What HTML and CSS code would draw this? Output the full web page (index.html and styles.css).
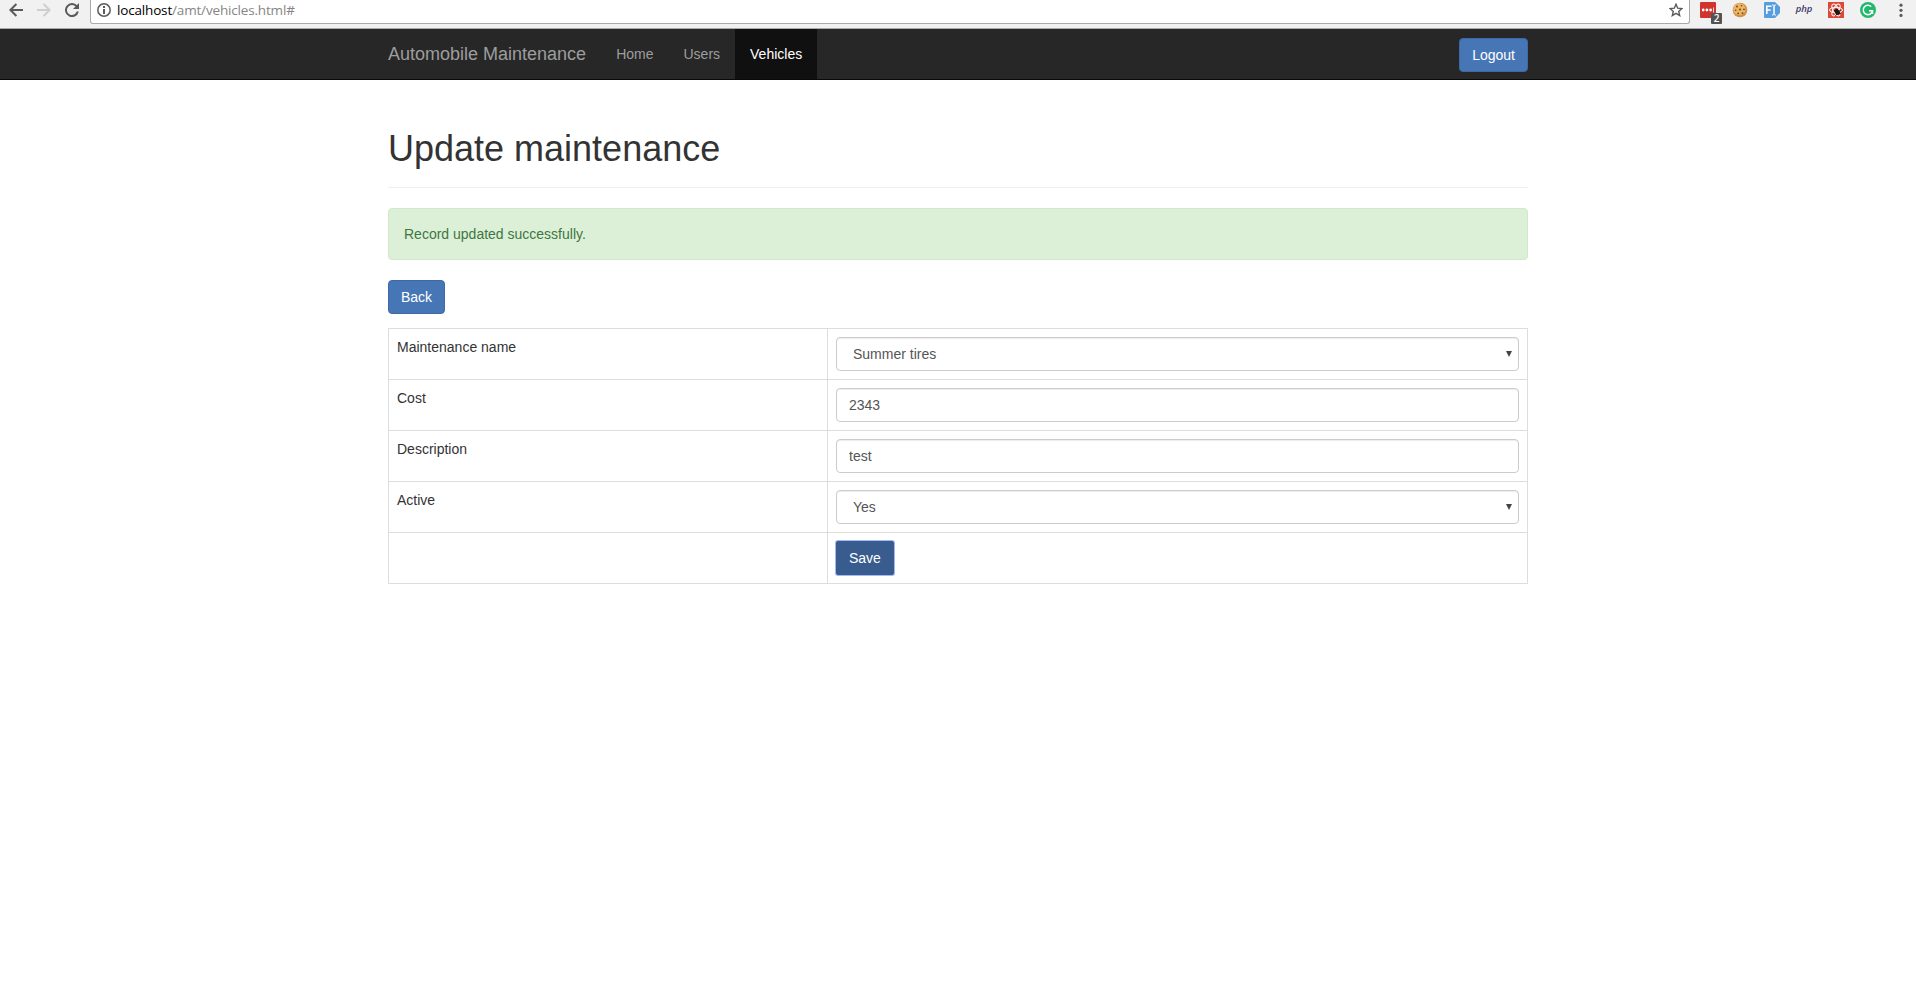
FILE: index.html
```html
<!DOCTYPE html>
<html lang="en">
<head>
<meta charset="utf-8">
<title>Automobile Maintenance</title>
<link rel="stylesheet" href="styles.css">
</head>
<body>
<div class="toolbar">
  <div class="controls">
    <svg width="14" height="14" viewBox="0 0 14 14" fill="none" stroke="#5a5a5a" stroke-width="2"><path d="M14 7H1.6M7.4 1L1.4 7l6 6"/></svg>
    <svg width="14" height="14" viewBox="0 0 14 14" fill="none" stroke="#cfcfcf" stroke-width="2"><path d="M0 7h12.4M6.6 1l6 6-6 6"/></svg>
    <svg width="14" height="14" viewBox="0 0 14 14"><path d="M11.7 3.4A6 6 0 1 0 12.8 8.5" fill="none" stroke="#5a5a5a" stroke-width="2"/><path d="M14 0v6H8z" fill="#5a5a5a"/></svg>
  </div>
  <div class="address">
    <svg width="14" height="14" viewBox="0 0 14 14"><circle cx="7" cy="7" r="6.2" fill="none" stroke="#5a5a5a" stroke-width="1.5"/><path d="M6 3h2v2H6zM6 6h2v5H6z" fill="#5a5a5a"/></svg>
    <span class="url"><span class="host">localhost</span>/amt/vehicles.html#</span>
    <svg class="star" width="14" height="14" viewBox="0 0 14 14"><path d="M7 1.2l1.7 4 4.2.4-3.2 2.8 1 4.2L7 10.4l-3.7 2.2 1-4.2L1.1 5.6l4.2-.4z" fill="none" stroke="#5a5a5a" stroke-width="1.4"/></svg>
  </div>
  <div class="extensions">
    <span class="ext pass"><svg width="16" height="16" viewBox="0 0 16 16"><rect width="16" height="16" rx="1" fill="#d0342c"/><g fill="#fff"><circle cx="3.2" cy="8" r="1.4"/><circle cx="6.9" cy="8" r="1.4"/><circle cx="10.6" cy="8" r="1.4"/><path d="M13 5.5h1v5h-1z" opacity=".8"/></g></svg><span class="count">2</span></span>
    <svg class="ext" width="16" height="16" viewBox="0 0 16 16"><circle cx="8" cy="8" r="7.3" fill="#d29042"/><circle cx="7.4" cy="7.2" r="6" fill="#edb665"/><g fill="#73411b"><circle cx="5" cy="4.5" r=".9"/><circle cx="9.5" cy="3.8" r=".8"/><circle cx="8" cy="7.4" r="1"/><circle cx="3.7" cy="8.3" r=".8"/><circle cx="12" cy="7.3" r=".9"/><circle cx="6.2" cy="11.4" r=".9"/><circle cx="10.5" cy="11.2" r=".9"/></g></svg>
    <svg class="ext" width="16" height="16" viewBox="0 0 16 16"><path d="M1 0h10l5 5v6l-5 5H1a1 1 0 0 1-1-1V1a1 1 0 0 1 1-1z" fill="#579ee0"/><path d="M2.8 12V4.2h4.7M2.8 8h3.8" fill="none" stroke="#fff" stroke-width="1.6"/><path d="M8 3c1.3 0 2 .3 2 1v8c0 .7-.7 1-2 1M12 3c-1.3 0-2 .3-2 1v8c0 .7.7 1 2 1" fill="none" stroke="#fff" stroke-width="1"/></svg>
    <span class="ext php">php</span>
    <svg class="ext" width="16" height="16" viewBox="0 0 16 16"><rect width="16" height="16" fill="#db4a39"/><g fill="none" stroke="#fff" stroke-width="1"><ellipse cx="8" cy="8" rx="6.5" ry="2.7"/><ellipse cx="8" cy="8" rx="6.5" ry="2.7" transform="rotate(60 8 8)"/><ellipse cx="8" cy="8" rx="6.5" ry="2.7" transform="rotate(120 8 8)"/></g><ellipse cx="9.2" cy="9.9" rx="2.4" ry="3.2" transform="rotate(-35 9.2 9.9)" fill="#24150f"/><path d="M5.5 8l7.5 4M12.5 8L7.5 13.5" stroke="#24150f"/></svg>
    <svg class="ext" width="16" height="16" viewBox="0 0 16 16"><circle cx="8" cy="8" r="8" fill="#23b86b"/><path d="M11.2 4.5A4.7 4.7 0 1 0 12.6 8.7H9M12.5 8.7v3.3" fill="none" stroke="#fff" stroke-width="1.5"/></svg>
    <svg class="ext menu" width="16" height="16" viewBox="0 0 16 16" fill="#5a5a5a"><circle cx="8" cy="3.2" r="1.6"/><circle cx="8" cy="8.3" r="1.6"/><circle cx="8" cy="13.4" r="1.6"/></svg>
  </div>
</div>
<nav class="navbar">
  <div class="container nav-inner">
    <a class="brand">Automobile Maintenance</a>
    <a class="nav-link">Home</a>
    <a class="nav-link">Users</a>
    <a class="nav-link active">Vehicles</a>
    <button class="btn logout">Logout</button>
  </div>
</nav>
<main class="container">
  <h1 class="title">Update maintenance</h1>
  <div class="alert">Record updated successfully.</div>
  <button class="btn">Back</button>
  <table class="form-table">
    <tr><td class="label">Maintenance name</td><td><div class="select"><select class="field"><option>Summer tires</option></select></div></td></tr>
    <tr><td class="label">Cost</td><td><input class="field" type="text" value="2343"></td></tr>
    <tr><td class="label">Description</td><td><input class="field" type="text" value="test"></td></tr>
    <tr><td class="label">Active</td><td><div class="select"><select class="field"><option>Yes</option></select></div></td></tr>
    <tr><td class="label"></td><td><button class="btn save">Save</button></td></tr>
  </table>
</main>
</body>
</html>
```
FILE: styles.css
```css
* { box-sizing: border-box; }
body {
  margin: 0;
  background: #fff;
  color: #333;
  font: 14px/20px "Liberation Sans", Arial, sans-serif;
}
.toolbar {
  display: flex;
  align-items: flex-start;
  height: 29px;
  background: #f1f1f1;
  border-bottom: 1px solid #a9aaa9;
}
.controls {
  display: flex;
  gap: 14px;
  width: 90px;
  padding: 3px 0 0 9px;
}
.address {
  display: flex;
  width: 1600px;
  height: 24px;
  padding: 3px 6px 0 6px;
  background: #fff;
  border: 1px solid #a9a9a9;
  border-top: 0;
  border-radius: 0 0 3px 3px;
}
.url {
  margin: -3px 0 0 6px;
  color: #858585;
  font: 13.5px/20px "Open Sans", sans-serif;
  letter-spacing: -.17px;
}
.host { color: #000; }
.star { margin-left: auto; }
.extensions {
  display: flex;
  gap: 16px;
  padding: 2px 0 0 10px;
}
.ext { flex: none; width: 16px; height: 16px; }
.pass { position: relative; }
.pass svg { display: block; }
.count {
  position: absolute;
  left: 11px;
  top: 11px;
  width: 11px;
  height: 11px;
  background: #535353;
  color: #fff;
  border-radius: 1px;
  font: 600 10px/11px "Open Sans", sans-serif;
  text-align: center;
}
.php {
  display: flex;
  justify-content: center;
  color: #3b3768;
  font: italic 600 9.5px/14px "Open Sans", sans-serif;
}
.menu { margin-left: 1px; }
.container { width: 1140px; margin: 0 auto; }
.navbar {
  height: 51px;
  background: #272727;
  border-bottom: 1px solid #090909;
}
.nav-inner { display: flex; align-items: flex-start; }
.brand {
  padding: 15px 15px 15px 0;
  color: #9d9d9d;
  font-size: 18px;
}
.nav-link { padding: 15px; color: #9d9d9d; }
.nav-link.active { background: #101010; color: #fff; }
.btn {
  display: block;
  height: 34px;
  padding: 6px 12px;
  border: 1px solid #3e69a2;
  border-radius: 4px;
  background: #4676b5;
  color: #fff;
  font: inherit;
}
.logout { margin: 9px 0 0 auto; }
.title {
  margin: 0 0 20px;
  padding: 49px 0 18px;
  border-bottom: 1px solid #eee;
  font-size: 36px;
  font-weight: 500;
  line-height: 40px;
}
.alert {
  height: 52px;
  margin-bottom: 20px;
  padding: 15px;
  border: 1px solid #d3e8c6;
  border-radius: 4px;
  background: #dcf0d8;
  color: #3f7641;
}
.form-table {
  width: 1140px;
  margin-top: 14px;
  border-collapse: collapse;
  table-layout: fixed;
}
.form-table td {
  height: 51px;
  padding: 8px;
  border: 1px solid #ddd;
  vertical-align: top;
}
.form-table .label { width: 439px; }
.field {
  display: block;
  width: 100%;
  height: 34px;
  padding: 6px 12px;
  border: 1px solid #ccc;
  border-radius: 4px;
  background: #fff;
  box-shadow: inset 0 1px 1px rgba(0, 0, 0, .075);
  color: #555;
  font: inherit;
  appearance: none;
}
.select { position: relative; }
.select .field { padding-left: 16px; }
.select::after {
  content: "";
  position: absolute;
  right: 7px;
  top: 14px;
  border: 3px solid transparent;
  border-top: 6px solid #444;
  border-bottom: 0;
}
.save {
  background: #385c8e;
  border-color: #385c8e;
  border-radius: 2px;
  box-shadow: 0 0 0 1px #a3b8f5;
}
```
